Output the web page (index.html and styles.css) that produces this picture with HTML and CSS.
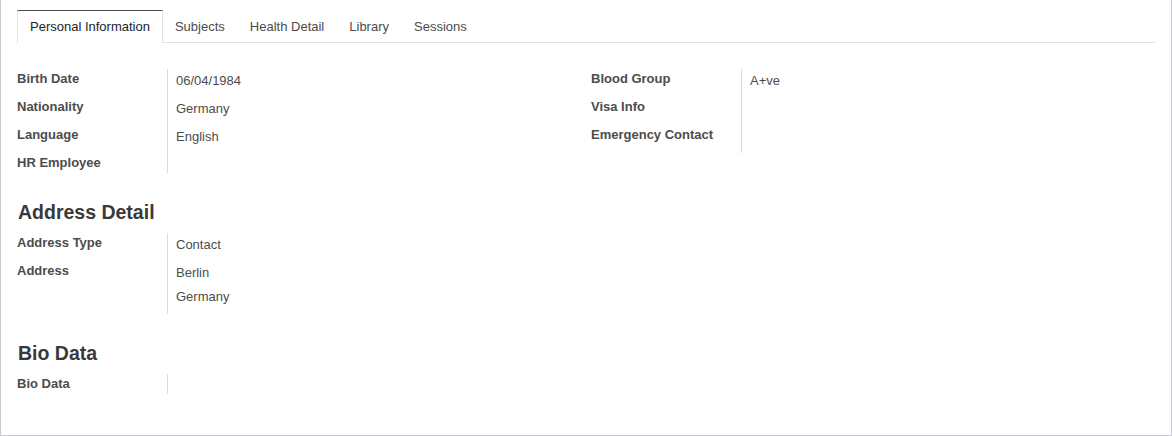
FILE: index.html
```html
<!DOCTYPE html>
<html>
<head>
<meta charset="utf-8">
<link rel="stylesheet" href="styles.css">
</head>
<body>
<div class="sheet">
  <ul class="tabs">
    <li class="tab active">Personal Information</li>
    <li class="tab">Subjects</li>
    <li class="tab">Health Detail</li>
    <li class="tab">Library</li>
    <li class="tab">Sessions</li>
  </ul>

  <div class="groups">
    <div class="group">
      <div class="row"><div class="label">Birth Date</div><div class="val"><div class="field">06/04/1984</div></div></div>
      <div class="row"><div class="label">Nationality</div><div class="val"><div class="field">Germany</div></div></div>
      <div class="row"><div class="label">Language</div><div class="val"><div class="field">English</div></div></div>
      <div class="row"><div class="label">HR Employee</div><div class="val"></div></div>
    </div>
    <div class="group">
      <div class="row"><div class="label">Blood Group</div><div class="val"><div class="field">A+ve</div></div></div>
      <div class="row"><div class="label">Visa Info</div><div class="val"><div class="field"></div></div></div>
      <div class="row"><div class="label">Emergency Contact</div><div class="val"><div class="field"></div></div></div>
    </div>
  </div>

  <h2 class="heading">Address Detail</h2>
  <div class="groups">
    <div class="group">
      <div class="row"><div class="label">Address Type</div><div class="val"><div class="field">Contact</div></div></div>
      <div class="row"><div class="label">Address</div><div class="val"><div class="field address"><div>Berlin</div><div>Germany</div></div></div></div>
    </div>
  </div>

  <h2 class="heading">Bio Data</h2>
  <div class="groups">
    <div class="group">
      <div class="row"><div class="label">Bio Data</div><div class="val"></div></div>
    </div>
  </div>
</div>
</body>
</html>
```
FILE: styles.css
```css
html, body {
  margin: 0;
  padding: 0;
  background: #fff;
}
body {
  font-family: "Liberation Sans", Arial, sans-serif;
  font-size: 13px;
  color: #4c4c4c;
}
.sheet {
  box-sizing: border-box;
  width: 1172px;
  height: 436px;
  border: 1px solid #c9c9d3;
  border-top: none;
  padding: 10px 16px 0 16px;
}
.tabs {
  list-style: none;
  margin: 0;
  padding: 0;
  display: flex;
  border-bottom: 1px solid #dee2e6;
  width: 1138px;
}
.tab {
  height: 31px;
  line-height: 31px;
  padding: 0 12px;
  border: 1px solid transparent;
  border-bottom: none;
  margin-bottom: -1px;
  margin-right: -1px;
  color: #4c4c4c;
}
.tab.active {
  border-color: #dee2e6;
  border-top-color: #4c4c4c;
  background: #fff;
  color: #212529;
  height: 32px;
  position: relative;
}
.groups {
  display: grid;
  grid-template-columns: 564px 564px;
  column-gap: 10px;
  width: 1138px;
}
.tabs + .groups {
  margin-top: 26px;
}
.group {
  display: flex;
  flex-direction: column;
}
.row {
  display: grid;
  grid-template-columns: 150px 1fr;
}
.label {
  font-weight: bold;
  line-height: 20px;
  color: #4c4c4c;
}
.val {
  border-left: 1px solid #dcdcdc;
  padding-left: 8px;
}
.field {
  padding-top: 3px;
  line-height: 18px;
  min-height: 18px;
  margin-bottom: 7px;
  color: #4c4c4c;
}
.field.address {
  margin-bottom: 8px;
}
.field.address div + div {
  margin-top: 6px;
}
.heading {
  margin: 27px 0 9px 1px;
  font-size: 19.5px;
  line-height: 24px;
  font-weight: bold;
  color: #393939;
}
```
